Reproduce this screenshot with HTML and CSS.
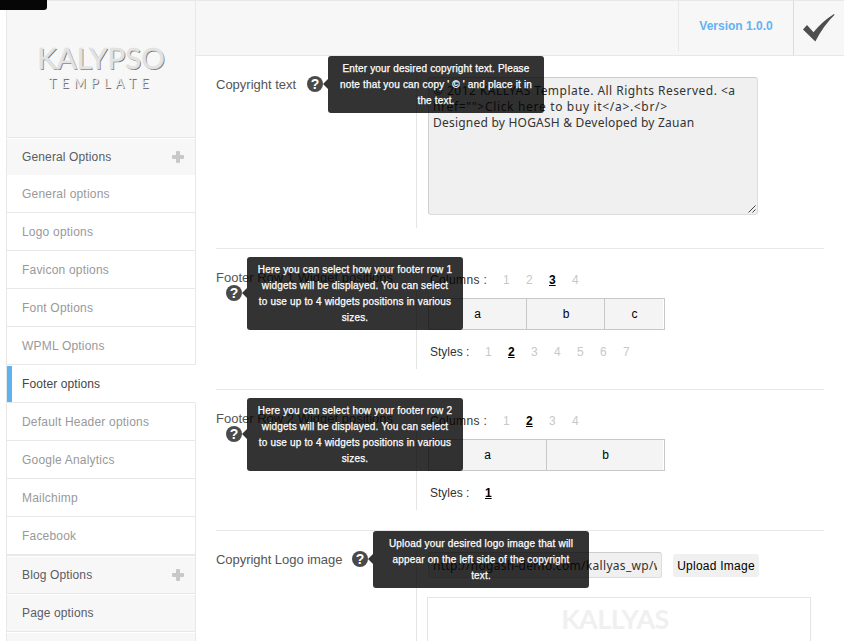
FILE: index.html
```html
<!DOCTYPE html>
<html lang="en">
<head>
<meta charset="utf-8">
<title>Kalypso Template options</title>
<link rel="stylesheet" href="styles.css">
</head>
<body>
<div class="admin-tab"></div>
<div class="app">
  <aside class="sidebar">
    <div class="logo"><div class="logo-name">KALYPSO</div><div class="logo-sub">TEMPLATE</div></div>
    <nav>
      <div class="group first">General Options<svg class="plus" viewBox="0 0 12 12"><path d="M5 0h2q1 0 1 1v3h3q1 0 1 1v2q0 1-1 1H8v3q0 1-1 1H5q-1 0-1-1V8H1q-1 0-1-1V5q0-1 1-1h3V1q0-1 1-1z"/></svg></div>
      <div class="item">General options</div>
      <div class="item">Logo options</div>
      <div class="item">Favicon options</div>
      <div class="item">Font Options</div>
      <div class="item">WPML Options</div>
      <div class="item active">Footer options</div>
      <div class="item">Default Header options</div>
      <div class="item">Google Analytics</div>
      <div class="item">Mailchimp</div>
      <div class="item">Facebook</div>
      <div class="group ruled">Blog Options<svg class="plus" viewBox="0 0 12 12"><path d="M5 0h2q1 0 1 1v3h3q1 0 1 1v2q0 1-1 1H8v3q0 1-1 1H5q-1 0-1-1V8H1q-1 0-1-1V5q0-1 1-1h3V1q0-1 1-1z"/></svg></div>
      <div class="group">Page options</div>
      <div class="group"></div>
    </nav>
  </aside>
  <main class="main">
    <header class="topbar">
      <div class="version">Version 1.0.0</div>
      <div class="save"><svg width="34" height="30" viewBox="0 0 34 30"><path d="M1 16.500 5 12l6.500 7.300Q20 8.500 32 1l.6.800Q22 12 13.300 28.500z"/></svg></div>
    </header>

    <section class="option tall">
      <div class="label"><span class="name">Copyright text</span><span class="help inline">?<span class="tip">Enter your desired copyright text. Please<br>note that you can copy ' © ' and place it in<br>the text.</span></span></div>
      <div class="field">
        <div class="textarea"><span class="line-a">© 2012 KALLYAS Template. All Rights Reserved. &lt;a</span><br><span class="line-b">href=""&gt;Click here to buy it&lt;/a&gt;.&lt;br/&gt;</span><br><span class="line-c">Designed by HOGASH &amp; Developed by Zauan</span><svg class="grip" width="8" height="8" viewBox="0 0 8 8"><path d="M.5 7.500l7-7M4.500 7.500l3-3"/></svg></div>
      </div>
    </section>

    <section class="option">
      <div class="label"><span class="name">Footer Row 1 Widget positions</span><span class="help">?<span class="tip">Here you can select how your footer row 1<br>widgets will be displayed. You can select<br>to use up to 4 widgets positions in various<br>sizes.</span></span></div>
      <div class="field">
        <div class="picker columns"><span class="caption">Columns :</span><span>1</span><span>2</span><span class="on">3</span><span>4</span></div>
        <div class="cells three"><div>a</div><div>b</div><div>c</div></div>
        <div class="picker"><span class="caption">Styles :</span><span>1</span><span class="on">2</span><span>3</span><span>4</span><span>5</span><span>6</span><span>7</span></div>
      </div>
    </section>

    <section class="option">
      <div class="label"><span class="name">Footer Row 2 Widget positions</span><span class="help">?<span class="tip">Here you can select how your footer row 2<br>widgets will be displayed. You can select<br>to use up to 4 widgets positions in various<br>sizes.</span></span></div>
      <div class="field">
        <div class="picker columns"><span class="caption">Columns :</span><span>1</span><span class="on">2</span><span>3</span><span>4</span></div>
        <div class="cells two"><div>a</div><div>b</div></div>
        <div class="picker"><span class="caption">Styles :</span><span class="on">1</span></div>
      </div>
    </section>

    <section class="option last">
      <div class="label"><span class="name narrow">Copyright Logo image</span><span class="help inline">?<span class="tip">Upload your desired logo image that will<br>appear on the left side of the copyright<br>text.</span></span></div>
      <div class="field">
        <div class="upload"><div class="url"><div class="url-text">http://hogash-demo.com/kallyas_wp/w</div></div><div class="button">Upload Image</div></div>
        <div class="preview">KALLYAS</div>
      </div>
    </section>
  </main>
</div>
</body>
</html>
```
FILE: styles.css
```css
* { box-sizing: border-box; }
body {
  margin: 0;
  height: 641px;
  overflow: hidden;
  background: #fff;
  font-family: "Liberation Sans", Arial, sans-serif;
  font-size: 12px;
  color: #333;
}
.admin-tab {
  position: absolute;
  left: 0;
  top: 0;
  width: 47px;
  height: 10px;
  background: #060606;
  border-radius: 0 0 3px 0;
}
.app { display: flex; height: 641px; padding-left: 6px; overflow: hidden; }

.sidebar { width: 190px; flex: none; }
.logo {
  height: 138px;
  padding-top: 39px;
  background: #f7f7f7;
  border: 1px solid #e8e8e8;
  text-align: center;
  font-family: Lato, sans-serif;
  color: #e3e3e3;
}
.logo-name {
  font-size: 29.500px;
  line-height: 35px;
  -webkit-text-stroke: .5px #e0e0e0;
  text-shadow: 1px 1px 0 #777;
}
.logo-sub {
  margin-top: 1px;
  font-size: 13px;
  line-height: 14px;
  letter-spacing: 5px;
  color: #eee;
  text-shadow: 1px 1px 0 #777;
}
.group, .item {
  display: flex;
  align-items: center;
  height: 38px;
  padding: 0 11px 0 15px;
  border: 1px solid #e8e8e8;
  border-top: 0;
  letter-spacing: .2px;
}
.group {
  justify-content: space-between;
  background: #f7f7f7;
  color: #5b5b63;
  letter-spacing: .13px;
  border-top: 1px solid #fff;
}
.group.first { height: 37px; border-bottom: 0; }
.group.ruled { height: 39px; border-top: 1px solid #e8e8e8; box-shadow: inset 0 1px #fff; }
.item { color: #999; }
.item.active {
  padding-left: 10px;
  border-left: 0;
  border-right-color: #fff;
  color: #444;
  letter-spacing: .1px;
  box-shadow: inset 1px 0 #e8e8e8;
}
.item.active::before {
  content: "";
  width: 5px;
  height: 36px;
  margin: 1px 10px 0 -9px;
  background: #5eb2ee;
}
.plus { width: 12px; height: 12px; fill: #c8c8c8; }

.main { width: 648px; flex: none; }
.topbar {
  display: flex;
  justify-content: flex-end;
  height: 56px;
  background: #f7f7f7;
  border-top: 1px solid #e8e8e8;
  border-bottom: 1px solid #e8e8e8;
}
.version {
  width: 115px;
  height: 50px;
  border-left: 1px solid #e8e8e8;
  text-align: center;
  font-weight: bold;
  line-height: 51px;
  color: #62b2f2;
}
.save {
  width: 51px;
  border-left: 1px solid #ddd;
  padding: 12px 0 0 8px;
}
.save svg { display: block; fill: #4e4e4e; }

.option {
  display: flex;
  width: 608px;
  height: 141px;
  margin-left: 20px;
  padding: 20px 0;
  border-bottom: 1px solid #e8e8e8;
}
.option.tall { height: 193px; }
.option.last { height: 150px; border-bottom: 0; }
.label { display: flex; flex-wrap: wrap; align-content: flex-start; width: 200px; font-size: 13px; line-height: 16px; color: #555; }
.name { width: 200px; height: 16px; padding-top: 1px; }
.option.tall .name { width: 81px; }
.option.last .name { width: 126px; letter-spacing: -.04px; white-space: nowrap; }
.field { width: 408px; border-left: 1px solid #e5e5e5; padding-left: 11px; }
.help {
  position: relative;
  width: 16px;
  height: 16px;
  margin-left: 10px;
  border-radius: 50%;
  background: #4a4a4a;
  color: #fff;
  text-align: center;
  font-size: 14px;
  font-weight: bold;
  line-height: 16px;
}
.tip {
  position: absolute;
  z-index: 2;
  left: 21px;
  top: -36px;
  width: 216px;
  padding: 5px 0 4px;
  border-radius: 3px;
  background: rgba(0, 0, 0, .8);
  color: #fff;
  font-size: 10px;
  font-weight: normal;
  line-height: 16px;
  letter-spacing: .17px;
  white-space: nowrap;
  -webkit-text-stroke: .25px #fff;
}
.tip::before {
  content: "";
  position: absolute;
  left: -5px;
  top: 31px;
  border: 5px solid transparent;
  border-left: 0;
  border-right-color: rgba(0, 0, 0, .8);
}
.help:not(.inline) .tip { top: -28px; }
.help.inline .tip { top: -20px; }
.help.inline .tip::before { top: 23px; }

.textarea, .url-text { font-family: "Noto Sans", sans-serif; }
.textarea {
  position: relative;
  width: 330px;
  height: 138px;
  margin-top: 1px;
  padding: 5px 4px;
  background: #f0f0f0;
  border: 1px solid #ddd;
  border-top-color: #ccc;
  border-left-color: #d0d0d0;
  border-radius: 3px;
  line-height: 16px;
  white-space: nowrap;
}
.line-a { letter-spacing: .46px; }
.line-b { letter-spacing: .67px; }
.line-c { letter-spacing: .22px; }
.grip { position: absolute; right: 1px; bottom: 1px; stroke: #444; fill: none; }

.picker { display: flex; height: 16px; padding-left: 2px; line-height: 16px; }
.picker span { width: 7px; margin-right: 16px; color: #c8c8c8; }
.picker .caption { width: 55px; margin-right: 0; color: #333; }
.picker.columns { margin-top: 3px; }
.picker.columns .caption { width: 73px; letter-spacing: .35px; }
.picker .on { font-weight: bold; text-decoration: underline; color: #000; }
.cells {
  display: grid;
  width: 237px;
  height: 32px;
  margin: 10px 0 14px;
  padding-right: 1px;
  border: 1px solid #c8c8c8;
  line-height: 30px;
  text-align: center;
  color: #000;
}
.cells.three { grid-template-columns: 98px 78px 1fr; }
.cells.two { grid-template-columns: 118px 1fr; }
.cells div { background: #f4f4f4; border-right: 1px solid #c8c8c8; }
.cells div + div { padding-left: 1px; }
.cells div:last-child { border-right: 0; }

.upload { display: flex; align-items: center; height: 28px; }
.url {
  width: 234px;
  height: 26px;
  padding: 0 4px;
  background: #f0f0f0;
  border: 1px solid #ddd;
  border-top-color: #ccc;
  border-radius: 3px;
}
.url-text { overflow: hidden; line-height: 26px; letter-spacing: .3px; white-space: nowrap; }
.button {
  width: 86px;
  height: 23px;
  margin-left: 11px;
  border-radius: 3px;
  background: #f0f0f0;
  text-align: center;
  line-height: 24px;
  letter-spacing: .25px;
  color: #000;
}
.preview {
  width: 384px;
  height: 80px;
  margin: 18px 0 0 -1px;
  padding-right: 8px;
  border: 1px solid #e5e5e5;
  text-align: center;
  font: bold 27px/42px Lato, sans-serif;
  letter-spacing: -.6px;
  color: #f0f0f0;
}
```
